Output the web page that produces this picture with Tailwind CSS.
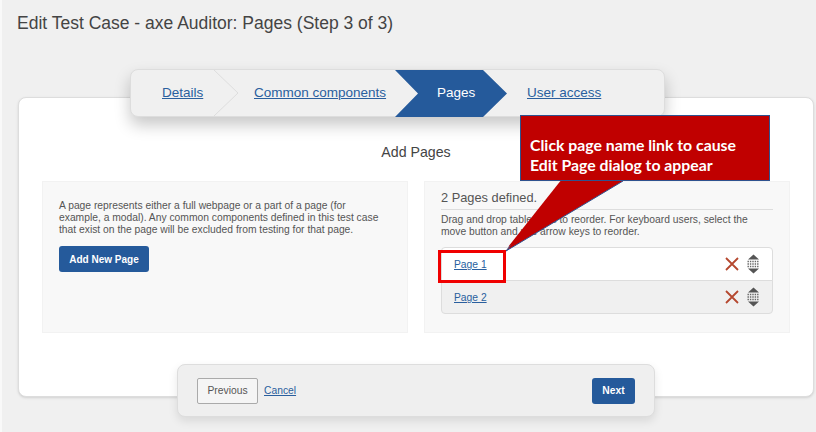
<!doctype html>
<html lang="en">
<head>
    <meta charset="UTF-8" />
    <title>Edit Test Case</title>
    <script src="https://cdn.jsdelivr.net/npm/@tailwindcss/browser@4"></script>
</head>
<body>
    <div class="relative w-[816px] h-[432px] overflow-hidden bg-[#f0f0f0] font-['Liberation_Sans',Arial,sans-serif] text-[#555]">
        <div class="absolute left-0 top-0 w-[2px] h-full bg-[#f9f9f9]"></div>
        <h1 class="pl-[17px] pt-[12px] h-[97px] text-[17.5px] leading-[22px] text-[#444]">Edit Test Case - axe Auditor: Pages (Step 3 of 3)</h1>

        <!-- main card -->
        <div class="ml-[18px] w-[796px] h-[300px] bg-white rounded-lg border border-[#ddd] shadow-sm px-[23px]">
            <h2 class="pt-[45px] h-[83px] text-center text-[14.2px] leading-[18px] text-[#444]">Add Pages</h2>
            <div class="flex gap-[16px]">
                <div class="w-[366px] h-[152px] bg-[#f8f8f8] border border-[#f2f2f2] pl-[16px] pt-[18px]">
                    <p class="text-[10.3px] leading-[12px]">A page represents either a full webpage or a part of a page (for<br>example, a modal). Any common components defined in this test case<br>that exist on the page will be excluded from testing for that page.</p>
                    <button class="mt-[10px] h-[26px] w-[90px] rounded-[3px] bg-[#255a9b] text-white text-[10px] font-bold">Add New Page</button>
                </div>
                <div class="w-[366px] h-[152px] bg-[#f8f8f8] border border-[#f2f2f2] pl-[16px] pr-[16px] pt-[8px]">
                    <div class="h-[20px] border-b border-[#ddd] text-[12.8px] leading-[16px]">2 Pages defined.</div>
                    <p class="mt-[4px] text-[10.3px] leading-[12px]">Drag and drop table rows to reorder. For keyboard users, select the move button and use arrow keys to reorder.</p>
                    <div class="mt-[9px] w-[332px]">
                        <div class="flex items-center h-[34px] bg-white border border-[#ddd] rounded-t-[4px] pl-[12px] pr-[11px]">
                            <a href="#" class="pt-[2px] text-[10.3px] text-[#2a5f9e] underline">Page 1</a>
                            <svg class="ml-auto" width="14" height="14" viewBox="0 0 14 14"><path d="M1 1 13 13M13 1 1 13" stroke="#b5482f" stroke-width="1.8" fill="none"/></svg>
                            <svg class="ml-[7px]" width="15" height="20" viewBox="0 0 15 20"><path d="M7.500 0.500 13 5.500H2ZM2 14.500H13L7.500 19.500Z" fill="#555"/><path d="M1.500 7.500H13.500M1.500 10H13.500M1.500 12.500H13.500" stroke="#666" stroke-width="1.300" stroke-dasharray="1.400 1" fill="none"/></svg>
                        </div>
                        <div class="flex items-center h-[34px] -mt-px bg-[#f0f0f0] border border-[#ddd] rounded-b-[4px] pl-[12px] pr-[11px]">
                            <a href="#" class="pt-[2px] text-[10.3px] text-[#2a5f9e] underline">Page 2</a>
                            <svg class="ml-auto" width="14" height="14" viewBox="0 0 14 14"><path d="M1 1 13 13M13 1 1 13" stroke="#b5482f" stroke-width="1.8" fill="none"/></svg>
                            <svg class="ml-[7px]" width="15" height="20" viewBox="0 0 15 20"><path d="M7.500 0.500 13 5.500H2ZM2 14.500H13L7.500 19.500Z" fill="#555"/><path d="M1.500 7.500H13.500M1.500 10H13.500M1.500 12.500H13.500" stroke="#666" stroke-width="1.300" stroke-dasharray="1.400 1" fill="none"/></svg>
                        </div>
                    </div>
                </div>
            </div>
        </div>

        <!-- stepper, sits over the top edge of the card -->
        <div class="absolute left-[130px] top-[69px] w-[535px] h-[48px] flex items-center rounded-lg bg-[#f0f0f0] border border-[#ddd] shadow-[0_8px_16px_rgba(0,0,0,0.22)] text-[13.5px]">
            <svg class="absolute left-[83px] top-0" width="26" height="46" viewBox="0 0 26 46"><path d="M0 0 24 23 0 46" fill="none" stroke="#ddd"/></svg>
            <div class="absolute left-[264px] top-0 w-[113px] h-[47px] bg-[#255a9b] [clip-path:polygon(0_0,88px_0,112px_50%,88px_100%,0_100%,23px_50%)]"></div>
            <a href="#" class="absolute left-[31px] text-[#2a5f9e] underline">Details</a>
            <a href="#" class="absolute left-[123px] text-[#2a5f9e] underline">Common components</a>
            <span class="absolute left-[306px] text-white">Pages</span>
            <a href="#" class="absolute left-[396px] text-[#2a5f9e] underline">User access</a>
        </div>

        <!-- footer bar -->
        <div class="absolute left-[177px] top-[364px] w-[478px] h-[53px] flex items-center rounded-lg bg-[#efefef] border border-[#ddd] shadow-[0_4px_10px_rgba(0,0,0,0.1)] pl-[19px] pr-[19px]">
            <button class="w-[61px] h-[26px] bg-[#f5f5f5] border border-[#aaa] rounded-[2px] text-[10.3px] text-[#555]">Previous</button>
            <a href="#" class="ml-[6px] text-[10.3px] text-[#2a5f9e] underline">Cancel</a>
            <button class="ml-auto w-[43px] h-[26px] bg-[#255a9b] rounded-[3px] text-white text-[10.3px] font-bold">Next</button>
        </div>

        <!-- annotation -->
        <svg class="absolute left-[500px] top-[175px]" width="130" height="80" viewBox="0 0 130 80"><path d="M62 6 6 76 123 6" fill="#c00000" stroke="#2f528f" stroke-width="1"/><path d="M62 4 8 72 122 4Z" fill="#c00000"/></svg>
        <div class="absolute left-[520px] top-[115px] w-[250px] h-[66px] bg-[#c00000] border border-[#2f528f] pl-[9px] pt-[19px] font-['Lato',sans-serif] font-bold text-[15.800px] leading-[20px] text-white">Click page name link to cause<br>Edit Page dialog to appear</div>
        <div class="absolute left-[438px] top-[250px] w-[68px] h-[33px] border-[3px] border-[#f00000]"></div>
    </div>
</body>
</html>
